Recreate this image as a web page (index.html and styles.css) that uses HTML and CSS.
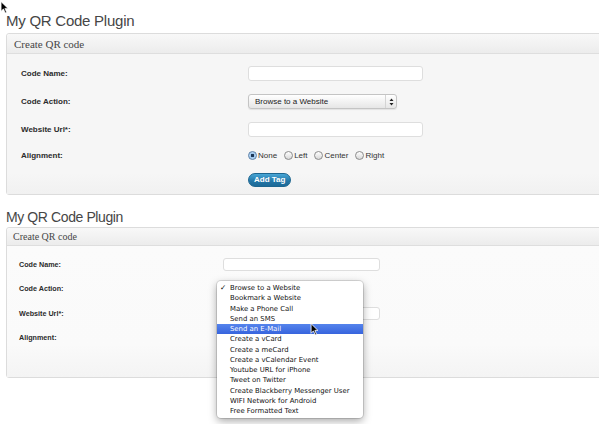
FILE: index.html
```html
<!DOCTYPE html>
<html>
<head>
<meta charset="utf-8">
<link rel="stylesheet" href="styles.css">
</head>
<body>
<div class="page">
  <h2 class="title">My QR Code Plugin</h2>
  <div class="panel p1">
    <div class="panel-head">Create QR code</div>
    <div class="panel-body">
      <div class="row r28"><div class="label">Code Name:</div><div class="input"></div></div>
      <div class="row r28"><div class="label">Code Action:</div>
        <div class="select"><span class="select-text">Browse to a Website</span>
          <span class="select-arrows"><svg width="5" height="8" viewBox="0 0 5 8"><path d="M2.5 0.5 L4.5 3 L0.5 3 Z M0.5 5 L4.5 5 L2.5 7.5 Z" fill="#222"/></svg></span>
        </div>
      </div>
      <div class="row r28"><div class="label">Website Url*:</div><div class="input"></div></div>
      <div class="row r24"><div class="label">Alignment:</div>
        <div class="radios">
          <span class="opt"><span class="radio checked"></span>None</span>
          <span class="opt"><span class="radio"></span>Left</span>
          <span class="opt"><span class="radio"></span>Center</span>
          <span class="opt"><span class="radio"></span>Right</span>
        </div>
      </div>
      <div class="row r25"><div class="label"></div><span class="btn">Add Tag</span></div>
    </div>
  </div>

  <h2 class="title title-2">My QR Code Plugin</h2>
  <div class="panel p2">
    <div class="panel-head">Create QR code</div>
    <div class="panel-body">
      <div class="row r245"><div class="label">Code Name:</div><div class="input"></div></div>
      <div class="row r245"><div class="label">Code Action:</div><div class="select select-sm"></div></div>
      <div class="row r245"><div class="label">Website Url*:</div><div class="input"></div></div>
      <div class="row r245"><div class="label">Alignment:</div></div>
      <div class="row r22"><div class="label"></div><span class="btn-ghost"></span></div>

      <ul class="menu">
        <li class="item sel">Browse to a Website</li>
        <li class="item">Bookmark a Website</li>
        <li class="item">Make a Phone Call</li>
        <li class="item">Send an SMS</li>
        <li class="item hi">Send an E-Mail</li>
        <li class="item">Create a vCard</li>
        <li class="item">Create a meCard</li>
        <li class="item">Create a vCalendar Event</li>
        <li class="item">Youtube URL for iPhone</li>
        <li class="item">Tweet on Twitter</li>
        <li class="item">Create Blackberry Messenger User</li>
        <li class="item">WIFI Network for Android</li>
        <li class="item">Free Formatted Text</li>
      </ul>
    </div>
  </div>

  <svg class="cursor cursor-top" width="9" height="13" viewBox="0 0 12 19"><path d="M1 1 L1 15 L4.5 11.5 L7 17.5 L9 16.6 L6.6 10.8 L11 10.8 Z" fill="#000" stroke="#fff" stroke-width="1"/></svg>
  <svg class="cursor cursor-menu" width="9" height="13" viewBox="0 0 12 19"><path d="M1 1 L1 15 L4.5 11.5 L7 17.5 L9 16.6 L6.6 10.8 L11 10.8 Z" fill="#000" stroke="#fff" stroke-width="1.2"/></svg>
</div>
</body>
</html>
```

FILE: styles.css
```css
html, body {
  margin: 0;
  padding: 0;
  background: #fff;
  overflow: hidden;
}

body {
  font-family: "Liberation Sans", Arial, sans-serif;
  color: #2b2b2b;
}

.page {
  position: relative;
  overflow: hidden;
  height: 424px;
}

.title {
  margin: 12px 0 3px 6px;
  font-weight: normal;
  font-size: 15px;
  line-height: 18px;
  letter-spacing: -0.25px;
  color: #464646;
}

.title-2 {
  margin: 13px 0 1px 6px;
  font-size: 14px;
  letter-spacing: -0.4px;
}

.panel {
  margin-left: 6px;
  margin-right: -20px;
  border: 1px solid #dcdcdc;
  border-radius: 3px;
}

.panel-head {
  font-family: "Liberation Serif", "Times New Roman", serif;
  color: #464646;
  border-bottom: 1px solid #dedede;
  background: linear-gradient(#f8f8f8, #ececec);
  border-radius: 3px 3px 0 0;
}

.p1 .panel-head {
  height: 17px;
  padding: 2px 0 0 7px;
  line-height: 17px;
  font-size: 11px;
}

.p2 .panel-head {
  height: 16px;
  padding: 1px 0 0 6px;
  line-height: 16px;
  font-size: 10px;
}

.panel-body {
  position: relative;
}

.p1 .panel-body {
  padding: 5.5px 0 1.5px 14px;
  background: linear-gradient(#f6f6f6 0%, #f6f6f6 85%, #f1f1f1 100%);
}

.p2 .panel-body {
  padding: 5.75px 0 5.25px 12px;
  background: linear-gradient(#fbfbfb 0%, #fafafa 75%, #f4f4f4 100%);
}

.row {
  display: flex;
  align-items: center;
}

.r28 { height: 28px; }
.r24 { height: 24px; }
.r25 { height: 25px; }
.r245 { height: 24.5px; }
.r22 { height: 22px; }

.label {
  font-weight: bold;
  flex: none;
}

.p1 .label {
  width: 227px;
  font-size: 8px;
}

.p2 .label {
  width: 204px;
  font-size: 7.2px;
}

.input {
  background: #fff;
  border: 1px solid #dedede;
  border-radius: 3px;
}

.p1 .input {
  width: 173px;
  height: 13px;
}

.p2 .input {
  width: 155px;
  height: 11px;
}

.select {
  width: 147px;
  height: 13px;
  border: 1px solid #c4c4c4;
  border-radius: 3px;
  background: linear-gradient(#ffffff, #e6e6e6);
  display: flex;
  align-items: center;
  box-shadow: 0 1px 1px rgba(0,0,0,0.08);
}

.select-sm {
  width: 132px;
  height: 12px;
}

.select-text {
  flex: 1;
  font-size: 8px;
  padding-left: 6px;
  color: #222;
}

.select-arrows {
  width: 10px;
  height: 13px;
  border-left: 1px solid #d4d4d4;
  display: flex;
  align-items: center;
  justify-content: center;
}

.radios {
  display: flex;
  align-items: center;
  gap: 7px;
}

.opt {
  display: flex;
  align-items: center;
  font-size: 8px;
  color: #333;
}

.radio {
  width: 7px;
  height: 7px;
  border: 1px solid #8c8c8c;
  border-radius: 50%;
  background: linear-gradient(#ffffff, #d8d8d8);
  margin-right: 1px;
}

.radio.checked {
  background: radial-gradient(circle, #1b3556 0 1.4px, #9cc6ee 1.9px, #cfe4f8 100%);
  border-color: #5a7fa8;
}

.btn {
  display: inline-block;
  height: 12px;
  line-height: 12px;
  padding: 0 5px;
  border: 1px solid #1d6690;
  border-radius: 7px;
  background: linear-gradient(#48a6d6, #2476a6 60%, #1c6a98);
  color: #fff;
  font-weight: bold;
  font-size: 8px;
}

.btn-ghost {
  display: inline-block;
  width: 40px;
  height: 12px;
  border-radius: 6px;
  background: #2476a6;
}

.menu {
  position: absolute;
  left: 210px;
  top: 35px;
  width: 146px;
  margin: 0;
  padding: 2px 0;
  list-style: none;
  background: #fff;
  border-radius: 4px;
  box-shadow: 0 0 0 1px rgba(0,0,0,0.12), 0 3px 9px rgba(0,0,0,0.35);
  font-family: "DejaVu Sans", Verdana, sans-serif;
  font-size: 6.9px;
  color: #111;
  z-index: 2;
}

.item {
  position: relative;
  height: 10.25px;
  line-height: 10.25px;
  padding-left: 13px;
  white-space: nowrap;
}

.item.sel::before {
  content: "\2713";
  position: absolute;
  left: 3px;
  top: 0;
  font-size: 7.5px;
  font-weight: bold;
}

.item.hi {
  background: linear-gradient(#5584ec, #3764dd);
  color: #fff;
}

.cursor {
  position: absolute;
  z-index: 3;
}

.cursor-top {
  left: 0;
  top: 1px;
}

.cursor-menu {
  left: 310px;
  top: 323px;
}
```
